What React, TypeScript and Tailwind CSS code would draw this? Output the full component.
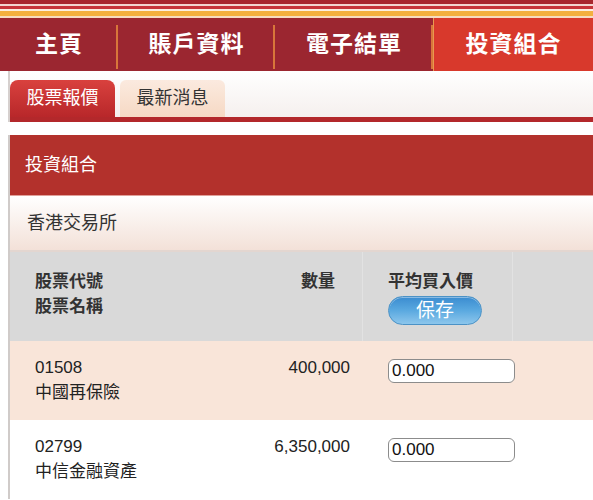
const font = { fontFamily: '"Liberation Sans", "Noto Sans CJK TC", sans-serif' };

const navItems = [
  { label: "主頁", w: "w-[118px]" },
  { label: "賬戶資料", w: "w-[157px]" },
  { label: "電子結單", w: "w-[158px]" },
];

const holdings = [
  { code: "01508", name: "中國再保險", qty: "400,000", price: "0.000", bg: "bg-[#f9e5d9]" },
  { code: "02799", name: "中信金融資產", qty: "6,350,000", price: "0.000", bg: "bg-white" },
];

export default function App() {
  return (
    <div className="w-[593px] h-[500px] overflow-hidden bg-white text-[#222]" style={font}>
      {/* top stripes */}
      <div className="h-[4px] bg-[#a8272e]" />
      <div className="h-[2px] bg-[#f3d6d0]" />
      <div className="h-[3px] bg-[#c7353a]" />
      <div className="h-[2px] bg-[#fbeee0]" />
      <div className="h-[5px] bg-[#f3b03f]" />
      <div className="h-[2px] bg-[#f7dcc0]" />

      {/* main nav */}
      <div className="flex h-[53px] bg-[#9b2630]">
        {navItems.map((n) => (
          <div key={n.label} className={`${n.w} flex items-center justify-center relative`}>
            <span className="text-white text-[23px] font-bold tracking-[1px]">{n.label}</span>
            <div className="absolute right-0 top-[7px] bottom-[2px] w-[2px] bg-[#d8763a]" />
          </div>
        ))}
        <div className="flex-1 flex items-center justify-center bg-[#d8392c] border-l border-[#e89a50]">
          <span className="text-white text-[23px] font-bold tracking-[1px]">投資組合</span>
        </div>
      </div>

      {/* sub nav */}
      <div className="ml-[8px] border-l-2 border-[#d6d0ce] bg-gradient-to-b from-white to-[#f4eeec]">
        <div className="flex items-end gap-[5px] h-[46px] pt-[9px]">
          <div className="w-[105px] h-full rounded-t-[8px] bg-gradient-to-b from-[#d9413e] to-[#b8272a] flex items-center justify-center text-white text-[18px]">
            股票報價
          </div>
          <div className="w-[105px] h-full rounded-t-[6px] bg-gradient-to-b from-[#fbeadf] to-[#f6d9c4] flex items-center justify-center text-[#333] text-[18px]">
            最新消息
          </div>
        </div>
        <div className="h-[5px] bg-[#b3282b]" />
      </div>

      <div className="h-[13px]" />

      {/* portfolio card */}
      <div className="ml-[8px] border-l-2 border-[#d0cbc9]">
        <div className="h-[61px] bg-[#b3312c] flex items-center pl-[15px] text-white text-[18px] border-b border-[#e0a09a]">
          投資組合
        </div>
        <div className="h-[56px] bg-gradient-to-b from-white to-[#f3e1d8] flex items-center pl-[17px] text-[18px] text-[#333] border-b-2 border-[#e3d6d0]">
          香港交易所
        </div>

        {/* table header */}
        <div className="grid grid-cols-[230px_123px_150px_1fr] h-[89px] bg-[#d9d9d9] text-[17px] leading-[25px] font-bold text-[#333]">
          <div className="pl-[25px] pt-[17px]">
            <div>股票代號</div>
            <div>股票名稱</div>
          </div>
          <div className="pt-[17px] pr-[27px] text-right border-r border-[#e2e2e2]">數量</div>
          <div className="pt-[17px] pl-[25px] border-r border-[#e2e2e2]">
            <div>平均買入價</div>
            <button className="mt-[2px] w-[94px] h-[29px] rounded-full bg-gradient-to-b from-[#3a8cd0] via-[#5aa9e0] to-[#8cc6ec] border border-[#4b92c6] text-white text-[19px] font-normal leading-[27px] shadow-[inset_0_1px_0_rgba(255,255,255,0.4)]">
              保存
            </button>
          </div>
          <div />
        </div>

        {/* rows */}
        {holdings.map((h) => (
          <div
            key={h.code}
            className={`grid grid-cols-[230px_123px_150px_1fr] h-[79px] ${h.bg} text-[17px] leading-[25px] text-[#222]`}
          >
            <div className="pl-[25px] pt-[14px]">
              <div>{h.code}</div>
              <div>{h.name}</div>
            </div>
            <div className="pt-[14px] pr-[13px] text-right">{h.qty}</div>
            <div className="pl-[25px] pt-[17px]">
              <input
                readOnly
                value={h.price}
                className="w-[127px] h-[24px] rounded-[6px] border border-[#8c8c8c] bg-white px-[3px] text-[17px] text-[#111] outline-none"
                style={font}
              />
            </div>
            <div />
          </div>
        ))}
      </div>
    </div>
  );
}
